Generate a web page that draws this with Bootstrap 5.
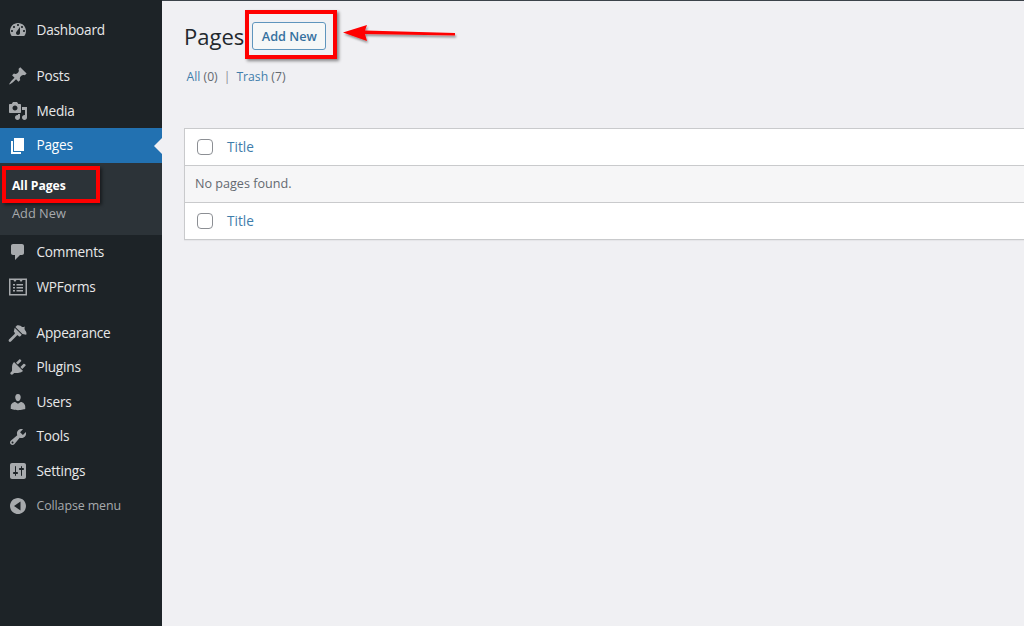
<!DOCTYPE html>
<html lang="en">
<head>
<meta charset="utf-8">
<title>Pages</title>
<link href="https://cdn.jsdelivr.net/npm/bootstrap@5.3.0/dist/css/bootstrap.min.css" rel="stylesheet">
<style>
html,body{height:100%;}
body{background:#f0f0f3;font-family:"Open Sans","Noto Sans",sans-serif;font-size:13px;color:#3c434a;overflow:hidden;width:1024px;height:626px;position:relative;}
.wp-shell{height:626px;}
.wp-side{width:162px;flex:none;background:#1d2327;padding-top:13px;}
.wp-item{height:34.6px;color:#e8e8e9;font-size:13.6px;letter-spacing:-.2px;padding-left:8px;gap:8.5px;text-decoration:none;position:relative;}
.wp-item svg{width:20px;height:20px;fill:#a7aaad;flex:none;}
.wp-gap{height:11.5px;}
.wp-item.wp-on{background:#2271b1;color:#fff;}
.wp-item.wp-on svg{fill:#fff;}
.wp-item.wp-on::after{content:"";position:absolute;right:0;top:50%;margin-top:-8px;border:8px solid transparent;border-right-color:#f0f0f3;}
.wp-sub{background:#2c3338;height:72px;padding:9px 0 0 12px;}
.wp-sub a{display:block;height:28px;line-height:27px;font-size:12.8px;color:#a7aaad;text-decoration:none;}
.wp-sub a.wp-cur{color:#fff;font-weight:700;font-size:12.2px;line-height:28px;letter-spacing:-.05px;}
.wp-collapse{color:#a7aaad;font-size:12.4px;letter-spacing:-.1px;}
.wp-main{padding:0 0 0 22px;border-top:1px solid #3c434a;min-width:0;overflow:hidden;}
.wp-title{font-size:22px;font-weight:400;color:#23282d;margin:0;line-height:30px;}
.wp-head{padding-top:20px;gap:8px;}
.wp-add{font-size:12.7px;font-weight:600;color:#35719f;border:1px solid #5f95bd;background:#f6f7f7;border-radius:3px;padding:0 8.500px;height:28px;line-height:26px;margin-top:1px;}
.wp-links{margin-top:17px;padding-left:2.500px;font-size:12.2px;color:#646970;gap:6px;}
.wp-links a,.wp-link{color:#3f7dab;text-decoration:none;}
.wp-sep{color:#8c8f94;}
.wp-tbl{margin-top:42px;background:#fff;border:1px solid #c9cacc;border-right:0;box-shadow:0 1px 1px rgba(0,0,0,.04);}
.wp-row{height:37px;padding-left:12px;gap:14px;font-size:13.6px;}
.wp-row:first-child{height:36px;}
.wp-row+.wp-row{border-top:1px solid #c9cacc;}
.wp-row.wp-empty{background:#f6f6f7;padding-left:10px;font-size:12.6px;color:#646970;}
.wp-check{width:16px;height:16px;border:1px solid #8c8f94;border-radius:4px;background:#fff;flex:none;}
.wp-mark{position:absolute;border:4px solid #f00;box-shadow:2px 2px 3px rgba(0,0,0,.45);}
.wp-mark-a{left:2px;top:166px;width:98px;height:37px;}
.wp-mark-b{left:245px;top:10px;width:92px;height:49px;}
.wp-arrow{position:absolute;left:340px;top:20px;width:122px;height:28px;}
</style>
</head>
<body>
<div class="d-flex wp-shell">
  <nav class="wp-side d-flex flex-column">
    <a class="wp-item d-flex align-items-center"><svg viewBox="0 0 20 20"><path fill-rule="evenodd" d="M3.76 16h12.48c1.100-1.370 1.760-3.110 1.760-5 0-4.420-3.580-8-8-8s-8 3.580-8 8c0 1.890.66 3.630 1.760 5zM10 4c.55 0 1 .45 1 1s-.45 1-1 1-1-.45-1-1 .45-1 1-1zM6 6c.55 0 1 .45 1 1s-.45 1-1 1-1-.45-1-1 .45-1 1-1zm8 0c.55 0 1 .45 1 1s-.45 1-1 1-1-.45-1-1 .45-1 1-1zm-5.370 5.550L12 7v6c0 1.100-.9 2-2 2s-2-.9-2-2c0-.57.24-1.080.63-1.450zM4 10c.55 0 1 .45 1 1s-.45 1-1 1-1-.45-1-1 .45-1 1-1zm12 0c.55 0 1 .45 1 1s-.45 1-1 1-1-.45-1-1 .45-1 1-1z"/></svg>Dashboard</a>
    <div class="wp-gap"></div>
    <a class="wp-item d-flex align-items-center"><svg viewBox="0 0 20 20"><path d="M10.440 3.020l1.820-1.820 6.360 6.350-1.830 1.820c-1.050-.68-2.480-.57-3.410.36l-.75.75c-.92.93-1.040 2.350-.35 3.410l-1.830 1.820-2.410-2.410-2.800 2.790c-.42.42-3.380 2.710-3.800 2.290s1.860-3.390 2.280-3.810l2.790-2.790L4.100 9.360l1.830-1.820c1.050.69 2.480.57 3.400-.36l.75-.75c.93-.92 1.050-2.350.36-3.410z"/></svg>Posts</a>
    <a class="wp-item d-flex align-items-center"><svg viewBox="0 0 20 20"><path fill-rule="evenodd" d="M13 11V4c0-.55-.45-1-1-1h-1.670L9 1H5L3.670 3H2c-.55 0-1 .45-1 1v7c0 .55.45 1 1 1h10c.55 0 1-.45 1-1zM7 4.500c1.380 0 2.500 1.120 2.500 2.500S8.380 9.500 7 9.500 4.500 8.380 4.500 7 5.620 4.500 7 4.500zM14 6h5v10.500c0 1.380-1.120 2.500-2.500 2.500S14 17.880 14 16.500s1.120-2.500 2.500-2.500c.17 0 .34.020.5.050V9h-3V6zm-4 8.050V13h2v3.500c0 1.380-1.120 2.500-2.500 2.500S7 17.880 7 16.500 8.120 14 9.500 14c.17 0 .34.020.5.050z"/></svg>Media</a>
    <a class="wp-item wp-on d-flex align-items-center"><svg viewBox="0 0 20 20"><path d="M6 15V2h10v13H6zm-1 1h8v2H3V5h2v11z"/></svg>Pages</a>
    <div class="wp-sub">
      <a class="wp-cur" href="#">All Pages</a>
      <a href="#">Add New</a>
    </div>
    <a class="wp-item d-flex align-items-center"><svg viewBox="0 0 20 20"><path d="M5 2h9c1.100 0 2 .9 2 2v7c0 1.100-.9 2-2 2h-2l-5 5v-5H5c-1.100 0-2-.9-2-2V4c0-1.100.9-2 2-2z"/></svg>Comments</a>
    <a class="wp-item d-flex align-items-center"><svg viewBox="0 0 20 20"><path fill-rule="evenodd" d="M1 1.500h18v17H1zM2.500 3v14h15V3h-2.800L13 5l-1.500-2h-3L7 5 5.300 3zM5 7h2v1.500H5zM8.500 7H15v1.500H8.500zM5 10h2v1.500H5zM8.500 10H15v1.500H8.500zM5 13h2v1.500H5zM8.500 13H15v1.500H8.500z"/></svg>WPForms</a>
    <div class="wp-gap"></div>
    <a class="wp-item d-flex align-items-center"><svg viewBox="0 0 20 20"><path d="M14.480 11.060L7.410 3.990l1.500-1.500c.5-.56 2.300-.47 3.510.32 1.210.8 1.430 1.280 2.660 1.280 1.240 0 1.930-.48 1.930-.48s-.48.69-.48 1.930c0 1.230.48 1.450 1.280 2.660.79 1.210.88 3.010.32 3.510z"/><path d="M6.700 4.700l7.070 7.070-1.410 1.410c-.44.44-1.150.44-1.590 0l-.53-.53c-.42-.42-1.120-.42-1.560.02L3 18.500c-.6.6-1.500.6-2 0s-.5-1.400 0-2l5.600-5.400c.44-.44.44-1.140.02-1.560l-.53-.53c-.44-.44-.44-1.150 0-1.590z"/></svg>Appearance</a>
    <a class="wp-item d-flex align-items-center"><svg viewBox="0 0 20 20"><path d="M13.110 4.360L9.870 7.600 8 5.730l3.240-3.240c.35-.34 1.050-.2 1.560.32.52.51.66 1.210.31 1.550zm-8 1.770l.91-1.120 9.010 9.010-1.190.84c-.71.71-2.630 1.160-3.820 1.160H6.140L4.900 17.260c-.59.59-1.540.59-2.120 0-.59-.58-.59-1.530 0-2.120l1.240-1.240v-3.880c0-1.130.4-3.100 1.090-3.890zm7.260 3.970l3.240-3.240c.34-.35 1.040-.21 1.550.31.52.51.66 1.210.31 1.550l-3.240 3.250z"/></svg>Plugins</a>
    <a class="wp-item d-flex align-items-center"><svg viewBox="0 0 20 20"><path d="M10 9.250c-2.270 0-2.730-3.440-2.730-3.440C7 4.020 7.820 2 9.970 2c2.160 0 2.980 2.020 2.710 3.810 0 0-.41 3.440-2.680 3.440zm0 2.570L12.720 10c2.390 0 4.520 2.330 4.520 4.530v2.490s-3.650 1.130-7.240 1.130c-3.650 0-7.240-1.130-7.240-1.130v-2.490c0-2.250 1.940-4.530 4.430-4.530z"/></svg>Users</a>
    <a class="wp-item d-flex align-items-center"><svg viewBox="0 0 20 20"><path fill-rule="evenodd" d="M16.680 9.770c-1.340 1.340-3.300 1.670-4.950.99l-5.410 6.520c-.99.99-2.590.99-3.570 0-.99-.98-.99-2.580 0-3.570l6.520-5.420c-.68-1.650-.35-3.610.99-4.950 1.280-1.280 3.120-1.620 4.720-1.060l-2.890 2.890 2.820 2.820 2.890-2.890c.56 1.600.22 3.440-1.060 4.720zM3.810 16.210c.4.39 1.040.39 1.430 0 .4-.4.4-1.040 0-1.430-.39-.4-1.030-.4-1.430 0-.39.39-.39 1.030 0 1.430z"/></svg>Tools</a>
    <a class="wp-item d-flex align-items-center"><svg viewBox="0 0 20 20"><path fill-rule="evenodd" d="M18 16V4c0-1.100-.9-2-2-2H4c-1.100 0-2 .9-2 2v12c0 1.100.9 2 2 2h12c1.100 0 2-.9 2-2zM8 11h1c.55 0 1 .45 1 1s-.45 1-1 1H8v1.500c0 .28-.22.5-.5.5s-.5-.22-.5-.5V13H6c-.55 0-1-.45-1-1s.45-1 1-1h1V5.500c0-.28.22-.5.5-.5s.5.22.5.5V11zm5-2h-1c-.55 0-1-.45-1-1s.45-1 1-1h1V5.500c0-.28.22-.5.5-.5s.5.22.5.5V7h1c.55 0 1 .45 1 1s-.45 1-1 1h-1v5.500c0 .28-.22.5-.5.5s-.5-.22-.5-.5V9z"/></svg>Settings</a>
    <a class="wp-item wp-collapse d-flex align-items-center"><svg viewBox="0 0 20 20"><path fill-rule="evenodd" d="M10 2c4.420 0 8 3.580 8 8s-3.580 8-8 8-8-3.580-8-8 3.580-8 8-8zM12.500 5.500L6 10l6.500 4.500z"/></svg>Collapse menu</a>
  </nav>
  <main class="wp-main flex-grow-1">
    <div class="wp-head d-flex align-items-start">
      <h1 class="wp-title">Pages</h1>
      <a class="wp-add btn" href="#">Add New</a>
    </div>
    <div class="wp-links d-flex">
      <span><a href="#">All</a> (0)</span><span class="wp-sep">|</span><span><a href="#">Trash</a> (7)</span>
    </div>
    <div class="wp-tbl">
      <div class="wp-row d-flex align-items-center"><span class="wp-check"></span><a class="wp-link" href="#">Title</a></div>
      <div class="wp-row wp-empty d-flex align-items-center">No pages found.</div>
      <div class="wp-row d-flex align-items-center"><span class="wp-check"></span><a class="wp-link" href="#">Title</a></div>
    </div>
  </main>
</div>
<div class="wp-mark wp-mark-a"></div>
<div class="wp-mark wp-mark-b"></div>
<svg class="wp-arrow" viewBox="0 0 122 28"><defs><filter id="sh" x="-10%" y="-30%" width="130%" height="180%"><feDropShadow dx="1" dy="2" stdDeviation="1.200" flood-color="#000" flood-opacity=".4"/></filter></defs><path filter="url(#sh)" fill="#f00" d="M3 12.500L27 5l-2 5.500 90 2.500v2.500L25 14l2 7z"/></svg>
</body>
</html>
